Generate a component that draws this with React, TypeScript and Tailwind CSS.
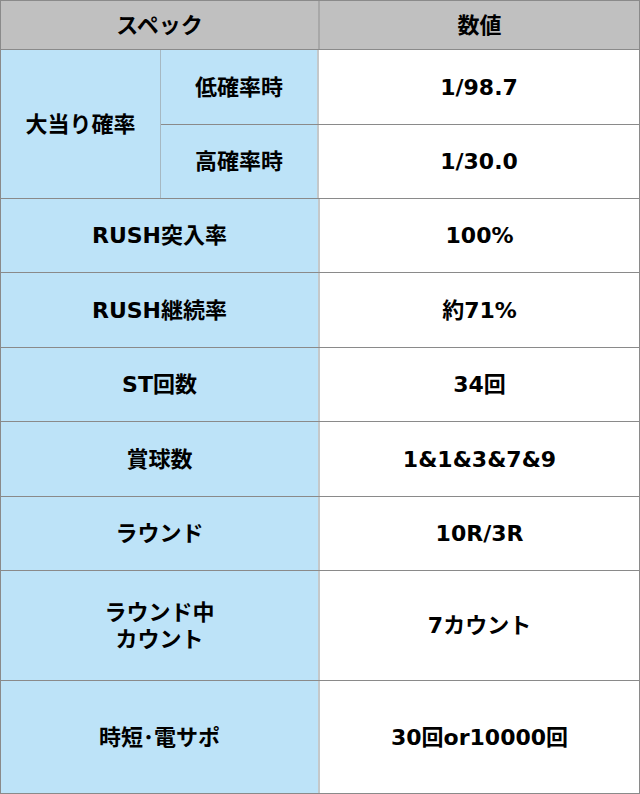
import React from 'react';

const font = 'font-["DejaVu_Sans","Noto_Sans_CJK_JP",sans-serif] font-bold text-[22px] leading-[27px] text-black';

type Row = { label: React.ReactNode; value: string; h: string };

const rows: Row[] = [
  { label: 'RUSH突入率', value: '100%', h: 'h-[74px]' },
  { label: 'RUSH継続率', value: '約71%', h: 'h-[75px]' },
  { label: 'ST回数', value: '34回', h: 'h-[74px]' },
  { label: '賞球数', value: '1&1&3&7&9', h: 'h-[75px]' },
  { label: 'ラウンド', value: '10R/3R', h: 'h-[74px]' },
  {
    label: (
      <>
        ラウンド中
        <br />
        カウント
      </>
    ),
    value: '7カウント',
    h: 'h-[110px]',
  },
  { label: '時短･電サポ', value: '30回or10000回', h: 'h-[112px]' },
];

export default function App() {
  return (
    <div className={`w-[640px] border border-[#8a8a8a] bg-white ${font}`}>
      <div className="flex h-[49px] border-b border-[#8a8a8a] bg-[#c0c0c0]">
        <div className="flex w-[319px] items-center justify-center border-r-2 border-[#a8a8a8]">スペック</div>
        <div className="flex flex-1 items-center justify-center">数値</div>
      </div>

      <div className="flex border-b border-[#8a8a8a]">
        <div className="flex w-[160px] items-center justify-center border-r border-[#a6b8c2] bg-[#bde3f8]">
          大当り確率
        </div>
        <div className="flex flex-1 flex-col">
          <div className="flex h-[75px] border-b border-[#8a8a8a]">
            <div className="flex w-[158px] items-center justify-center border-r-2 border-[#c4c8ca] bg-[#bde3f8]">
              低確率時
            </div>
            <div className="flex flex-1 items-center justify-center">1/98.7</div>
          </div>
          <div className="flex h-[73px]">
            <div className="flex w-[158px] items-center justify-center border-r-2 border-[#c4c8ca] bg-[#bde3f8]">
              高確率時
            </div>
            <div className="flex flex-1 items-center justify-center">1/30.0</div>
          </div>
        </div>
      </div>

      {rows.map((row, i) => (
        <div
          key={i}
          className={`flex ${row.h} ${i < rows.length - 1 ? 'border-b border-[#8a8a8a]' : ''}`}
        >
          <div className="flex w-[319px] items-center justify-center border-r-2 border-[#c4c8ca] bg-[#bde3f8] text-center">
            <span>{row.label}</span>
          </div>
          <div className="flex flex-1 items-center justify-center">{row.value}</div>
        </div>
      ))}
    </div>
  );
}
